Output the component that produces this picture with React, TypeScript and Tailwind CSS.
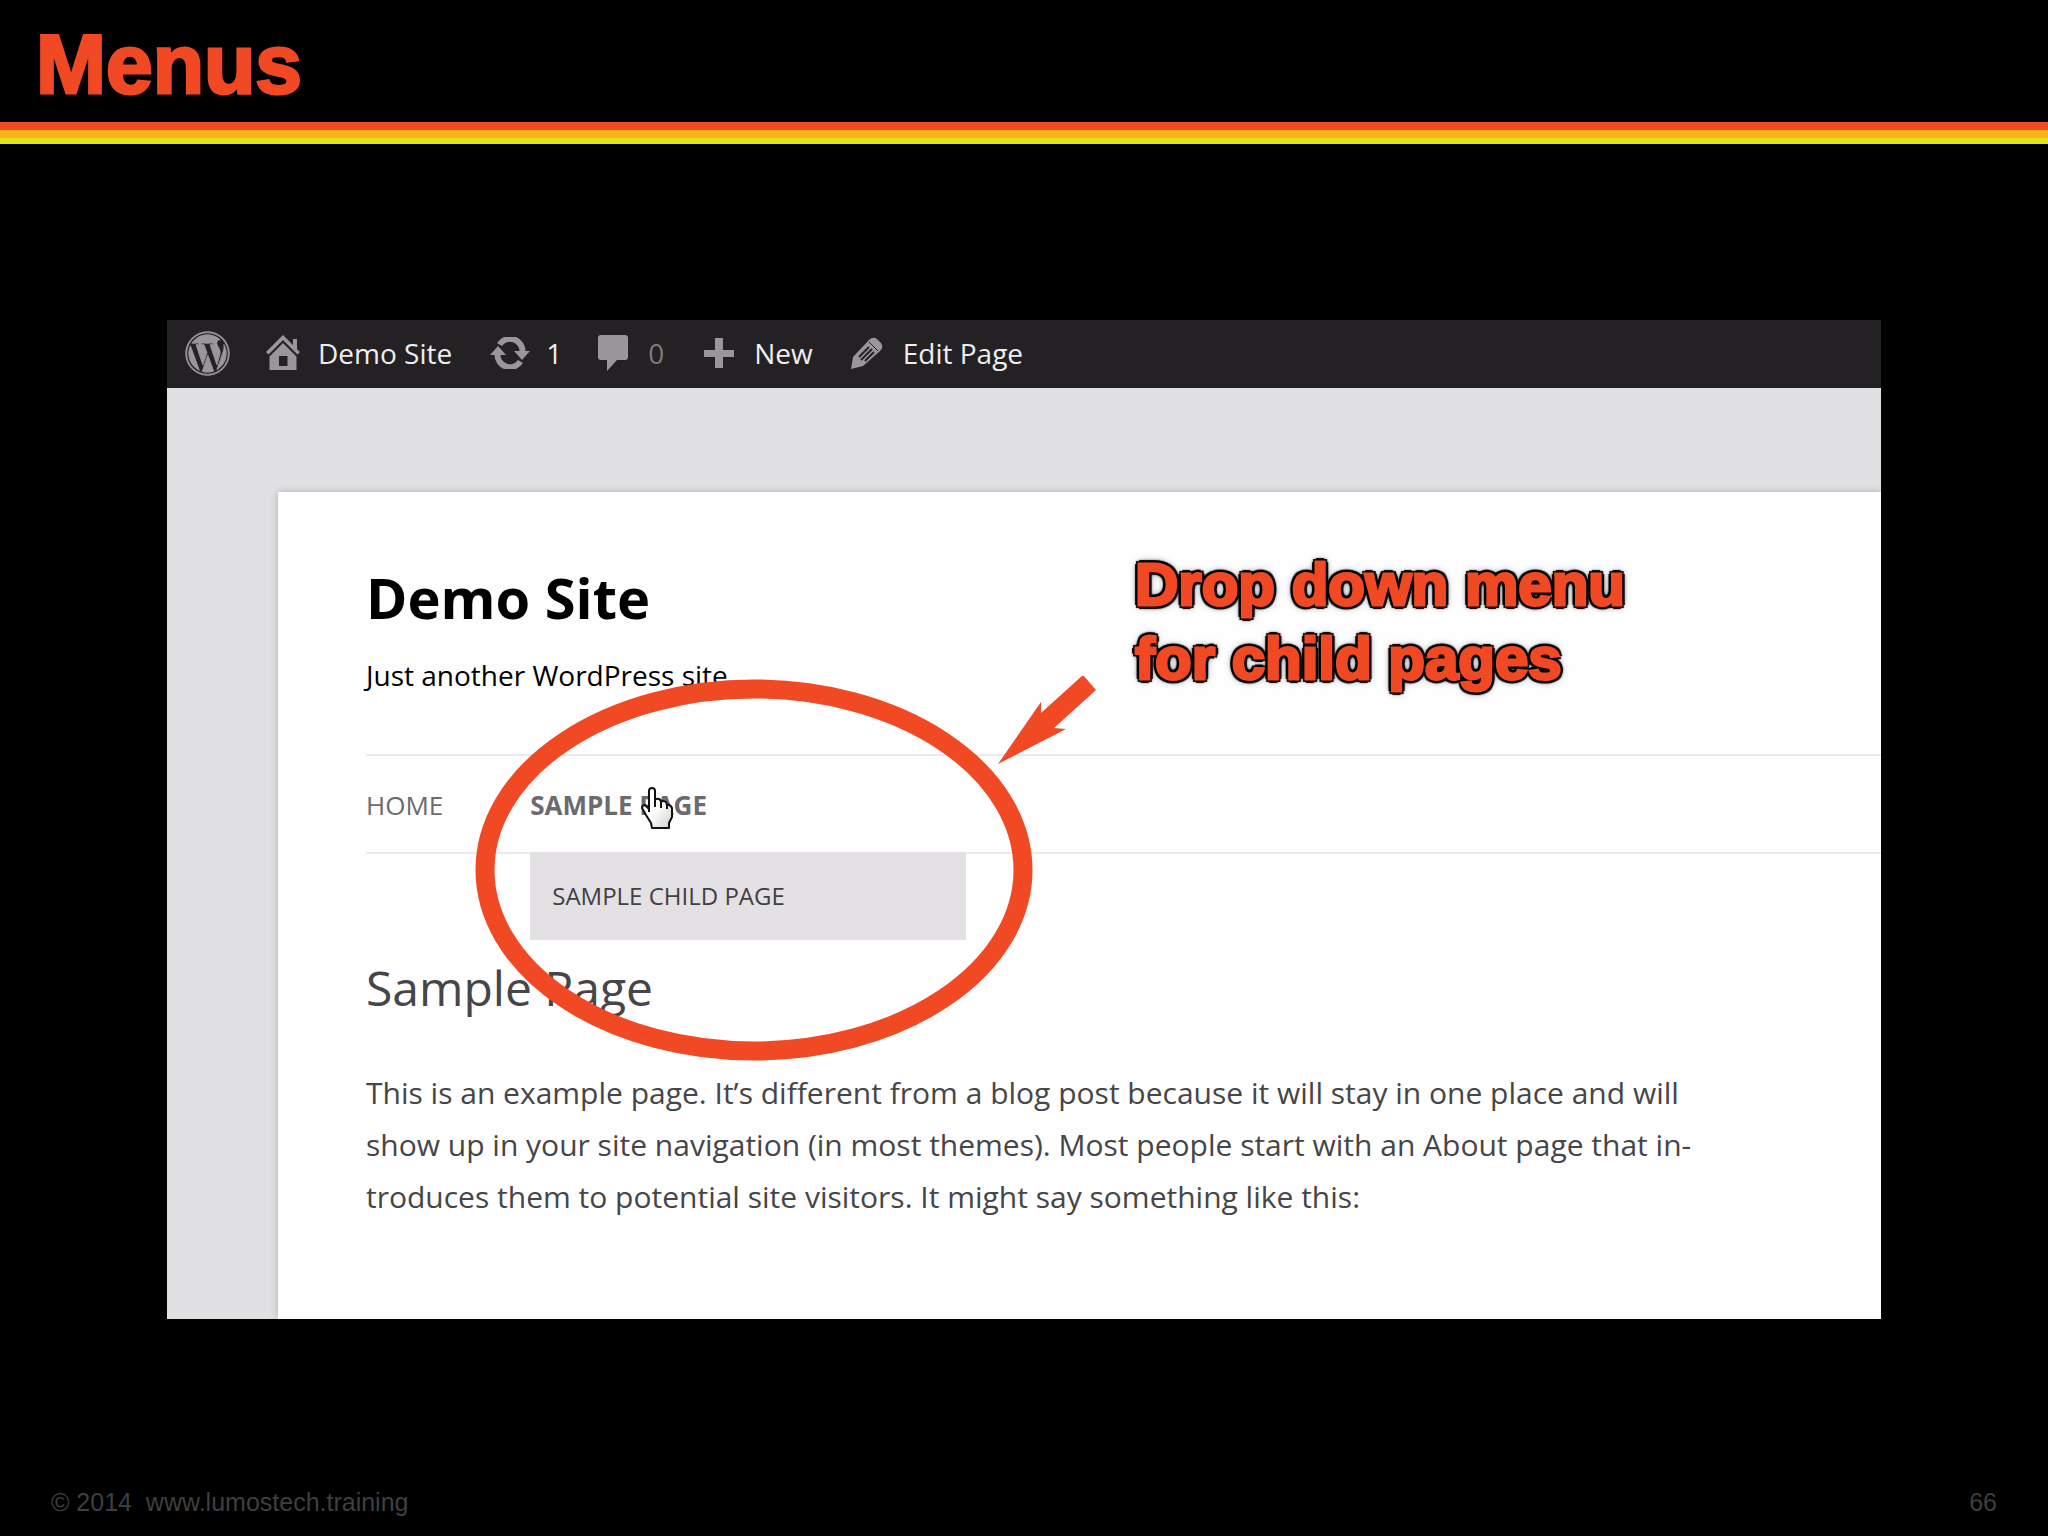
import React, { useState } from 'react';
import { FaWordpress } from 'react-icons/fa';

interface IconProps {
  className?: string;
}

const HomeIcon: React.FC<IconProps> = ({ className }) => (
  <svg viewBox="0 0 34 36" className={className} fill="currentColor" aria-hidden="true">
    <path d="M17 0 L27 10 V4 H31 V14 L34 17 L31.500 19.500 L17 5 L2.500 19.500 L0 17 Z" />
    <path d="M17 8 L30.500 21.500 V35 H3.500 V21.500 Z M13 21 V31 H21.500 V21 Z" fillRule="evenodd" />
  </svg>
);

const UpdatesIcon: React.FC<IconProps> = ({ className }) => (
  <svg viewBox="0 0 40 32" className={className} fill="none" aria-hidden="true">
    <path d="M9.500 7.500 A12.500 12.500 0 0 1 32.500 15" stroke="currentColor" strokeWidth="6" />
    <path d="M30.500 24.500 A12.500 12.500 0 0 1 7.500 17" stroke="currentColor" strokeWidth="6" />
    <path d="M24 14 H40 L32 23 Z" fill="currentColor" />
    <path d="M0 18 H16 L8 9 Z" fill="currentColor" />
  </svg>
);

const CommentIcon: React.FC<IconProps> = ({ className }) => (
  <svg viewBox="0 0 30 36" className={className} fill="currentColor" aria-hidden="true">
    <path d="M3 0 H27 Q30 0 30 3 V22 Q30 25 27 25 H19 L9 36 V25 H3 Q0 25 0 22 V3 Q0 0 3 0 Z" />
  </svg>
);

const PlusIcon: React.FC<IconProps> = ({ className }) => (
  <svg viewBox="0 0 30 30" className={className} fill="currentColor" aria-hidden="true">
    <path d="M11 0 H19 V12 H30 V19 H19 V30 H11 V19 H0 V12 H11 Z" />
  </svg>
);

const PencilIcon: React.FC<IconProps> = ({ className }) => (
  <svg viewBox="0 0 32 32" className={className} fill="currentColor" aria-hidden="true">
    <path d="M0 32 L2 20 L18 3 Q22 -1 26 2 L30 6 Q33 10 29 14 L12 29 Z" />
    <g stroke="#232124" strokeWidth="2" fill="none">
      <path d="M8 20 L18 10 M10 23 L21 12 M14 24 L23 15" />
      <path d="M18 5 L27 14" strokeWidth="1" />
    </g>
  </svg>
);

const HandCursor: React.FC<IconProps> = ({ className }) => (
  <svg viewBox="0 0 32 42" className={className} aria-hidden="true">
    <defs>
      <linearGradient id="hand" x1="0" y1="0" x2="1" y2="1">
        <stop offset="0.500" stopColor="#ffffff" />
        <stop offset="1" stopColor="#cfcfcf" />
      </linearGradient>
    </defs>
    <path
      d="M8 25 V4 Q8 1 11 1 Q14 1 14 4 V13 Q15 11 18 12 Q20 13 20 15 Q22 13 25 15 L26 18 Q29 17 31 21 V30 L28 36 V41 H11 L10 36 L5 28 L1 21 Q1 18 4 18 L8 22"
      fill="url(#hand)"
      stroke="#111111"
      strokeWidth="2"
      strokeLinejoin="round"
    />
    <path d="M14 13 V20 M20 15 V21 M26 18 V22" stroke="#111111" strokeWidth="2" fill="none" />
  </svg>
);

const AdminBar: React.FC = () => (
  <nav
    aria-label="Toolbar"
    className="flex h-[68px] items-center bg-[#232124] pb-[2px] pl-[18px] text-[28px] leading-10 text-[#eeeeee]"
  >
    <a href="#wordpress" aria-label="About WordPress" className="text-[#999799]">
      <FaWordpress className="size-[45px] overflow-visible stroke-current stroke-[10px]" />
    </a>
    <a href="#site" className="ml-9 flex items-center gap-[18px]">
      <HomeIcon className="h-9 w-[34px] text-[#999799]" />
      Demo Site
    </a>
    <a href="#updates" className="ml-[38px] flex items-center gap-4">
      <UpdatesIcon className="h-8 w-10 text-[#999799]" />
      1
    </a>
    <a href="#comments" className="ml-9 flex items-center gap-5 text-[#999799]">
      <CommentIcon className="h-9 w-[30px]" />
      <span className="text-[#7d7b7e]">0</span>
    </a>
    <a href="#new" className="ml-10 flex items-center gap-5">
      <PlusIcon className="size-[30px] text-[#999799]" />
      New
    </a>
    <a href="#edit" className="ml-[38px] flex items-center gap-5">
      <PencilIcon className="size-8 text-[#999799]" />
      Edit Page
    </a>
  </nav>
);

const SiteNav: React.FC = () => {
  const [open] = useState<boolean>(true);

  return (
    <nav
      aria-label="Main"
      className="mt-[59px] flex h-[100px] items-center gap-[87px] border-y-2 border-[#ebeaec] pt-[2px] text-[26px] leading-10 text-[#6c6a6d]"
    >
      <a href="#home">HOME</a>
      <div className="relative">
        <a href="#sample" className="font-bold">
          SAMPLE PAGE
        </a>
        <HandCursor className="absolute top-[2px] left-[111px] h-[42px] w-8" />
        {open && (
          <ul className="absolute top-[67px] left-0 w-[436px] bg-[#e4e1e5] px-[22px] py-6 text-2xl leading-10 text-[#414042]">
            <li>
              <a href="#child">SAMPLE CHILD PAGE</a>
            </li>
          </ul>
        )}
      </div>
    </nav>
  );
};

// Drawn over the page: ring round the menu, arrow and caption
const Callout: React.FC = () => (
  <div className="pointer-events-none absolute inset-0">
    <svg viewBox="0 0 630 390" className="absolute top-[356px] left-[306px] h-[390px] w-[630px]" aria-hidden="true">
      <ellipse cx="281" cy="194" rx="269" ry="181" fill="none" stroke="#f04923" strokeWidth="19" />
      <path d="M525 88 L568 26 V37 L610 -1 L623 14 L581 52 L593 53 Z" fill="#f04923" />
    </svg>
    <p className="absolute top-[228px] left-[968px] font-['Liberation_Sans',sans-serif] text-[60px] leading-[74px] font-bold whitespace-nowrap text-[#f04923] [-webkit-text-stroke:3px_#f04923] [text-shadow:4px_0_1px_#000,-4px_0_1px_#000,0_4px_1px_#000,0_-4px_1px_#000,3px_3px_1px_#000,-3px_-3px_1px_#000,3px_-3px_1px_#000,-3px_3px_1px_#000,0_0_8px_#000]">
      Drop down menu
      <br />
      for child pages
    </p>
  </div>
);

const App: React.FC = () => {
  return (
    <div className="flex min-h-screen flex-col bg-black font-['Open_Sans',sans-serif]">
      <header>
        <h1 className="flex h-[122px] items-center pt-[6px] pl-9 font-['Liberation_Sans',sans-serif] text-[84px] leading-none font-bold text-[#f04923] [-webkit-text-stroke:3px_#f04923]">
          Menus
        </h1>
        <div className="h-2 bg-[#f04923]" />
        <div className="h-2 bg-[#fbb01c]" />
        <div className="h-[6px] bg-[#e2e21c]" />
      </header>

      <main className="px-[167px] pt-44">
        <div className="relative overflow-hidden bg-[#e1e0e3]">
          <AdminBar />
          <div className="pt-[104px] pl-[111px]">
            <div className="bg-[#fefefe] pt-[67px] pb-24 pl-[88px] shadow-[0_0_8px_#b0afb2]">
              <h2 className="text-[56px] leading-[76px] font-bold text-black">Demo Site</h2>
              <p className="mt-5 text-[28px] leading-10 text-black">Just another WordPress site</p>
              <SiteNav />
              <h3 className="mt-[102px] text-5xl leading-[64px] text-[#464547]">Sample Page</h3>
              <p className="mt-[47px] max-w-[1350px] text-[30px] leading-[52px] text-[#464547]">
                This is an example page. It’s different from a blog post because it will stay in one place and will show
                up in your site navigation (in most themes). Most people start with an About page that in&shy;troduces
                them to potential site visitors. It might say something like this:
              </p>
            </div>
          </div>
          <Callout />
        </div>
      </main>

      <footer className="mt-auto flex items-center justify-between px-[51px] pb-[14px] font-['Liberation_Sans',sans-serif] text-[25px] leading-10 text-[#3f3e40]">
        <p className="whitespace-pre">© 2014  www.lumostech.training</p>
        <p>66</p>
      </footer>
    </div>
  );
};

export default App;
